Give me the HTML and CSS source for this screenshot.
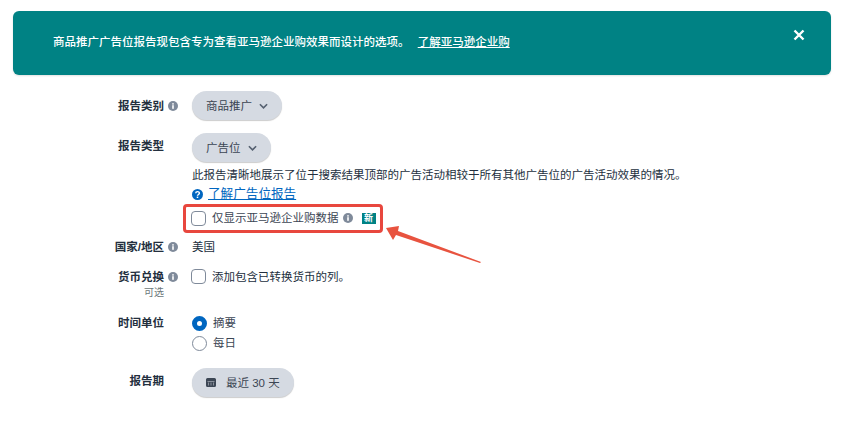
FILE: index.html
```html
<!DOCTYPE html>
<html lang="zh-CN">
<head>
<meta charset="utf-8">
<title>报告</title>
<link rel="stylesheet" href="styles.css">
</head>
<body>
<div class="banner">
  <p class="banner-text">商品推广广告位报告现包含专为查看亚马逊企业购效果而设计的选项。 <a class="banner-link" href="#">了解亚马逊企业购</a></p>
  <svg class="banner-close" viewBox="0 0 12 12"><path d="M1.500 1.500l9 9M10.500 1.500l-9 9"/></svg>
</div>
<form class="form">
  <div class="row row-cat">
    <div class="label">报告类别</div>
    <svg class="info" viewBox="0 0 10 10"><circle cx="5" cy="5" r="5"/><rect x="4.200" y="4.200" width="1.600" height="3.600" fill="#fff"/><rect x="4.200" y="2.200" width="1.600" height="1.400" fill="#fff"/></svg>
    <div class="value"><button type="button" class="pill">商品推广<svg class="chev" viewBox="0 0 10 6"><path d="M1 1l4 4 4-4"/></svg></button></div>
  </div>
  <div class="row row-type">
    <div class="label">报告类型</div>
    <span></span>
    <div class="value">
      <button type="button" class="pill">广告位<svg class="chev" viewBox="0 0 10 6"><path d="M1 1l4 4 4-4"/></svg></button>
      <p class="desc">此报告清晰地展示了位于搜索结果顶部的广告活动相较于所有其他广告位的广告活动效果的情况。</p>
      <p class="learn"><svg class="help" viewBox="0 0 10 10"><circle cx="5" cy="5" r="5"/><path class="help-mark" d="M3.400 3.900c0-2 3.300-2 3.300-.1 0 1.200-1.700 1.200-1.700 2.400"/><rect x="4.300" y="6.900" width="1.400" height="1.300" fill="#fff"/></svg><a class="link" href="#">了解广告位报告</a></p>
      <div class="biz">
        <span class="check"></span>
        <span class="biz-text">仅显示亚马逊企业购数据</span>
        <svg class="info" viewBox="0 0 10 10"><circle cx="5" cy="5" r="5"/><rect x="4.200" y="4.200" width="1.600" height="3.600" fill="#fff"/><rect x="4.200" y="2.200" width="1.600" height="1.400" fill="#fff"/></svg>
        <span class="new">新</span>
      </div>
    </div>
  </div>
  <div class="row row-country">
    <div class="label">国家/地区</div>
    <svg class="info" viewBox="0 0 10 10"><circle cx="5" cy="5" r="5"/><rect x="4.200" y="4.200" width="1.600" height="3.600" fill="#fff"/><rect x="4.200" y="2.200" width="1.600" height="1.400" fill="#fff"/></svg>
    <div class="value">美国</div>
  </div>
  <div class="row row-currency">
    <div class="label">货币兑换<small class="optional">可选</small></div>
    <svg class="info" viewBox="0 0 10 10"><circle cx="5" cy="5" r="5"/><rect x="4.200" y="4.200" width="1.600" height="3.600" fill="#fff"/><rect x="4.200" y="2.200" width="1.600" height="1.400" fill="#fff"/></svg>
    <div class="value check-line"><span class="check"></span><span>添加包含已转换货币的列。</span></div>
  </div>
  <div class="row row-unit">
    <div class="label">时间单位</div>
    <span></span>
    <div class="value radios">
      <div class="radio-line"><span class="radio radio-on"></span>摘要</div>
      <div class="radio-line"><span class="radio"></span>每日</div>
    </div>
  </div>
  <div class="row row-period">
    <div class="label">报告期</div>
    <span></span>
    <div class="value"><button type="button" class="pill pill-date"><svg class="cal" viewBox="0 0 10 10"><path d="M1.500 1h7A1.500 1.500 0 0 1 10 2.500v6A1.500 1.500 0 0 1 8.500 10h-7A1.500 1.500 0 0 1 0 8.500v-6A1.500 1.500 0 0 1 1.500 1z"/><path class="cal-dots" d="M1.500 4h7v.6h-7zM2 5.700h1v.8H2zM4.500 5.700h1v.8h-1zM7 5.700h1v.8H7zM2 7.500h1v.8H2zM4.500 7.500h1v.8h-1zM7 7.500h1v.8H7z"/></svg>最近 30 天</button></div>
  </div>
</form>
<div class="red-box"></div>
<svg class="arrow" viewBox="0 0 105 50"><polygon points="6,8 19,6 18,11 101,42 100,43 16,15 13,20"/></svg>
</body>
</html>
```

FILE: styles.css
```css
* { box-sizing: border-box; }
html, body { margin: 0; height: 100%; overflow: hidden; }
body {
  background: #fff;
  color: #232f3e;
  font-family: "Liberation Sans", "Noto Sans CJK SC", sans-serif;
  font-size: 11.5px;
  line-height: 16px;
  position: relative;
  padding-top: 11px;
}
p { margin: 0; }
.banner {
  margin: 0 16px 0 13px;
  height: 64px;
  background: #008284;
  border-radius: 6px;
  box-shadow: 0 1px 2px rgba(0,0,0,.12);
  color: #fff;
  display: flex;
  justify-content: space-between;
  padding: 23px 26px 0 40px;
}
.banner-text { font-weight: 500; }
.banner-link { color: #fff; text-decoration: underline; margin-left: 5px; }
.banner-close { width: 12px; height: 12px; margin-top: -5px; fill: none; stroke: #fff; stroke-width: 2.4; }
.form { padding-top: 16px; }
.row { display: grid; grid-template-columns: 164px 28px 1fr; }
.label { text-align: right; font-weight: 700; }
.optional { display: block; font-size: 10px; font-weight: 400; color: #6c7778; }
.info { width: 10px; height: 10px; fill: #7f8a9a; margin: 3px 0 0 4px; }
.pill {
  display: inline-flex;
  align-items: center;
  height: 29px;
  padding: 0 14px;
  border: 0;
  border-radius: 15px;
  background: #d5dae2;
  box-shadow: 0 1px 1px rgba(0,0,0,.2);
  color: #3c4654;
  font: inherit;
}
.chev { width: 9px; height: 6px; margin-left: 7px; fill: none; stroke: #556070; stroke-width: 1.8; }
.row-cat { align-items: start; }
.row-cat .label { margin-top: 7px; }
.row-cat .info { margin-top: 10px; }
.row-type { margin-top: 13px; }
.row-type .label { margin-top: 5px; }
.desc { margin-top: 5px; height: 16px; }
.learn { margin-top: 3px; display: flex; align-items: center; height: 16px; }
.help { width: 11px; height: 11px; fill: #0066c0; margin-right: 5px; }
.help-mark { fill: none; stroke: #fff; stroke-width: 1.3; }
.link { color: #0066c0; text-decoration: underline; font-size: 12.6px; }
.biz { display: flex; align-items: center; margin-top: 8px; height: 16px; margin-left: -1px; }
.check {
  width: 15px; height: 15px; flex: none;
  border: 1px solid #7f8a9a;
  border-radius: 4px;
  background: #fff;
}
.biz-text { margin-left: 6px; color: #3c4654; }
.biz .info { margin: 0 0 0 4px; }
.new {
  margin-left: 9px;
  width: 14px; height: 11px;
  background: #008284;
  color: #fff;
  font-size: 9px;
  line-height: 11px;
  text-align: center;
  font-weight: 700;
}
.row-country { margin-top: 13px; }
.row-currency { margin-top: 14px; }
.check-line { display: flex; align-items: flex-start; gap: 6px; margin-left: -1px; }
.row-unit { margin-top: 14px; }
.radios { display: flex; flex-direction: column; gap: 4px; }
.radio-line { display: flex; align-items: center; gap: 6px; height: 16px; color: #3c4654; }
.radio { width: 15px; height: 15px; border: 1px solid #7f8a9a; border-radius: 50%; background: #fff; }
.radio-on { border: 5px solid #0066c0; }
.row-period { margin-top: 17px; }
.row-period .label { margin-top: 5px; }
.pill-date { padding: 0 14px; }
.cal { width: 10px; height: 10px; margin: -2px 10px 0 0; fill: #3c4654; }
.cal-dots { fill: #d5dae2; }
.red-box {
  position: absolute;
  left: 183px; top: 204px;
  width: 200px; height: 29px;
  border: 3px solid #e8473e;
  border-radius: 4px;
}
.arrow {
  position: absolute;
  left: 380px; top: 220px;
  width: 105px; height: 50px;
  fill: #e8533f;
}
```
